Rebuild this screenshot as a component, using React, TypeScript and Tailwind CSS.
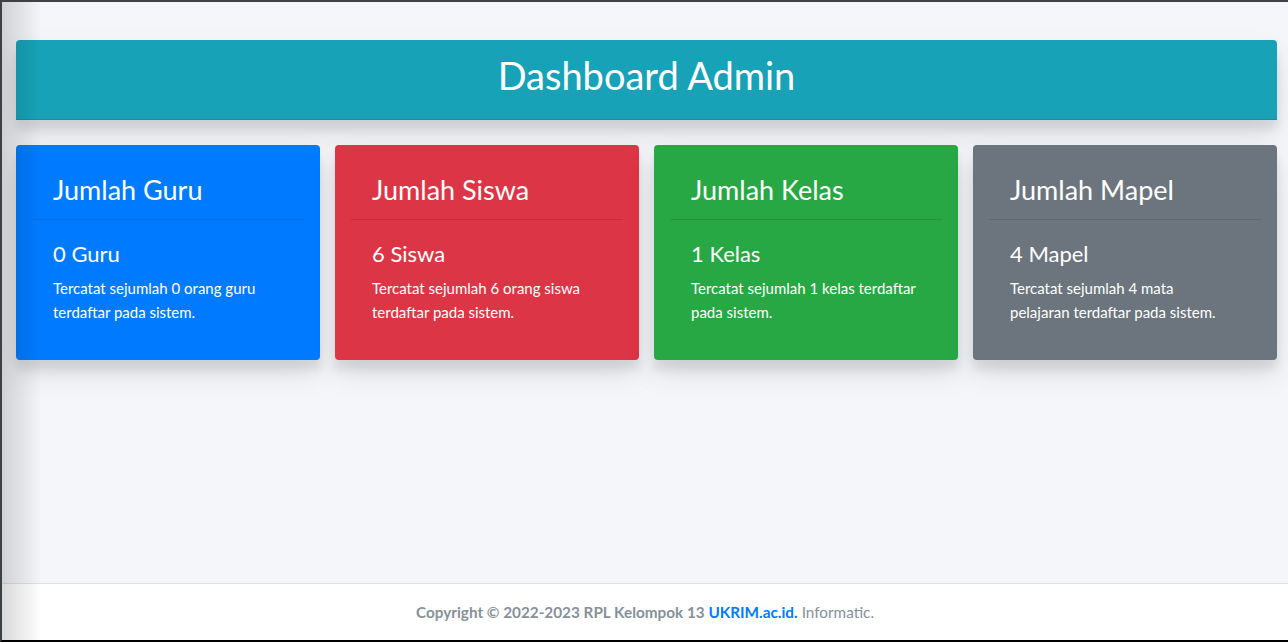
const cards = [
  {
    title: "Jumlah Guru",
    count: "0 Guru",
    lines: ["Tercatat sejumlah 0 orang guru", "terdaftar pada sistem."],
    bg: "bg-[#007bff]",
  },
  {
    title: "Jumlah Siswa",
    count: "6 Siswa",
    lines: ["Tercatat sejumlah 6 orang siswa", "terdaftar pada sistem."],
    bg: "bg-[#dc3545]",
  },
  {
    title: "Jumlah Kelas",
    count: "1 Kelas",
    lines: ["Tercatat sejumlah 1 kelas terdaftar", "pada sistem."],
    bg: "bg-[#28a745]",
  },
  {
    title: "Jumlah Mapel",
    count: "4 Mapel",
    lines: ["Tercatat sejumlah 4 mata", "pelajaran terdaftar pada sistem."],
    bg: "bg-[#6c757d]",
  },
];

function StatCard({ title, count, lines, bg }: (typeof cards)[number]) {
  return (
    <div
      className={`${bg} rounded-[4px] px-4 pt-4 pb-[36px] text-white shadow-[0_14px_28px_rgba(0,0,0,0.1),0_10px_10px_rgba(0,0,0,0.08)]`}
    >
      <div className="border-b border-black/10 px-[21px] pt-3 pb-3">
        <h3 className="text-[27px] leading-[34px]">{title}</h3>
      </div>
      <div className="px-[21px] pt-5">
        <h4 className="mb-2 text-[22px] leading-[28px]">{count}</h4>
        <p className="text-[15px] leading-6">
          {lines.map((l) => (
            <span key={l} className="block whitespace-nowrap">
              {l}
            </span>
          ))}
        </p>
      </div>
    </div>
  );
}

export default function App() {
  return (
    <div
      className="flex h-[642px] w-[1288px] flex-col overflow-hidden border-t-2 border-b-2 border-l-2 border-t-[#3d4146] border-b-black border-l-[#3d4146] bg-[#f4f6f9]"
      style={{ fontFamily: "Lato, 'Noto Sans', sans-serif" }}
    >
      <div className="relative flex flex-1 flex-col">
        <main className="flex-1 pt-[38px] pr-[11px] pl-[14px]">
          <div className="flex h-[80px] items-center justify-center rounded-t-[4px] border-b border-[#1492a6] bg-[#17a2b8] pb-2 shadow-[0_14px_28px_rgba(0,0,0,0.1),0_10px_10px_rgba(0,0,0,0.08)]">
            <h1 className="text-[38px] leading-[1.2] text-white">Dashboard Admin</h1>
          </div>
          <div className="mt-[25px] grid grid-cols-4 gap-[15px]">
            {cards.map((c) => (
              <StatCard key={c.title} {...c} />
            ))}
          </div>
        </main>
        <footer className="flex h-[57px] items-center justify-center border-t border-[#dee2e6] bg-white text-[15.3px] text-[#869099]">
          <strong className="font-bold">
            Copyright © 2022-2023 RPL Kelompok 13{" "}
            <span className="text-[#007bff]">UKRIM.ac.id.</span>
          </strong>
          <span className="ml-1">Informatic.</span>
        </footer>
        <div className="pointer-events-none absolute inset-y-0 left-0 w-[40px] bg-gradient-to-r from-black/15 to-transparent" />
      </div>
    </div>
  );
}
